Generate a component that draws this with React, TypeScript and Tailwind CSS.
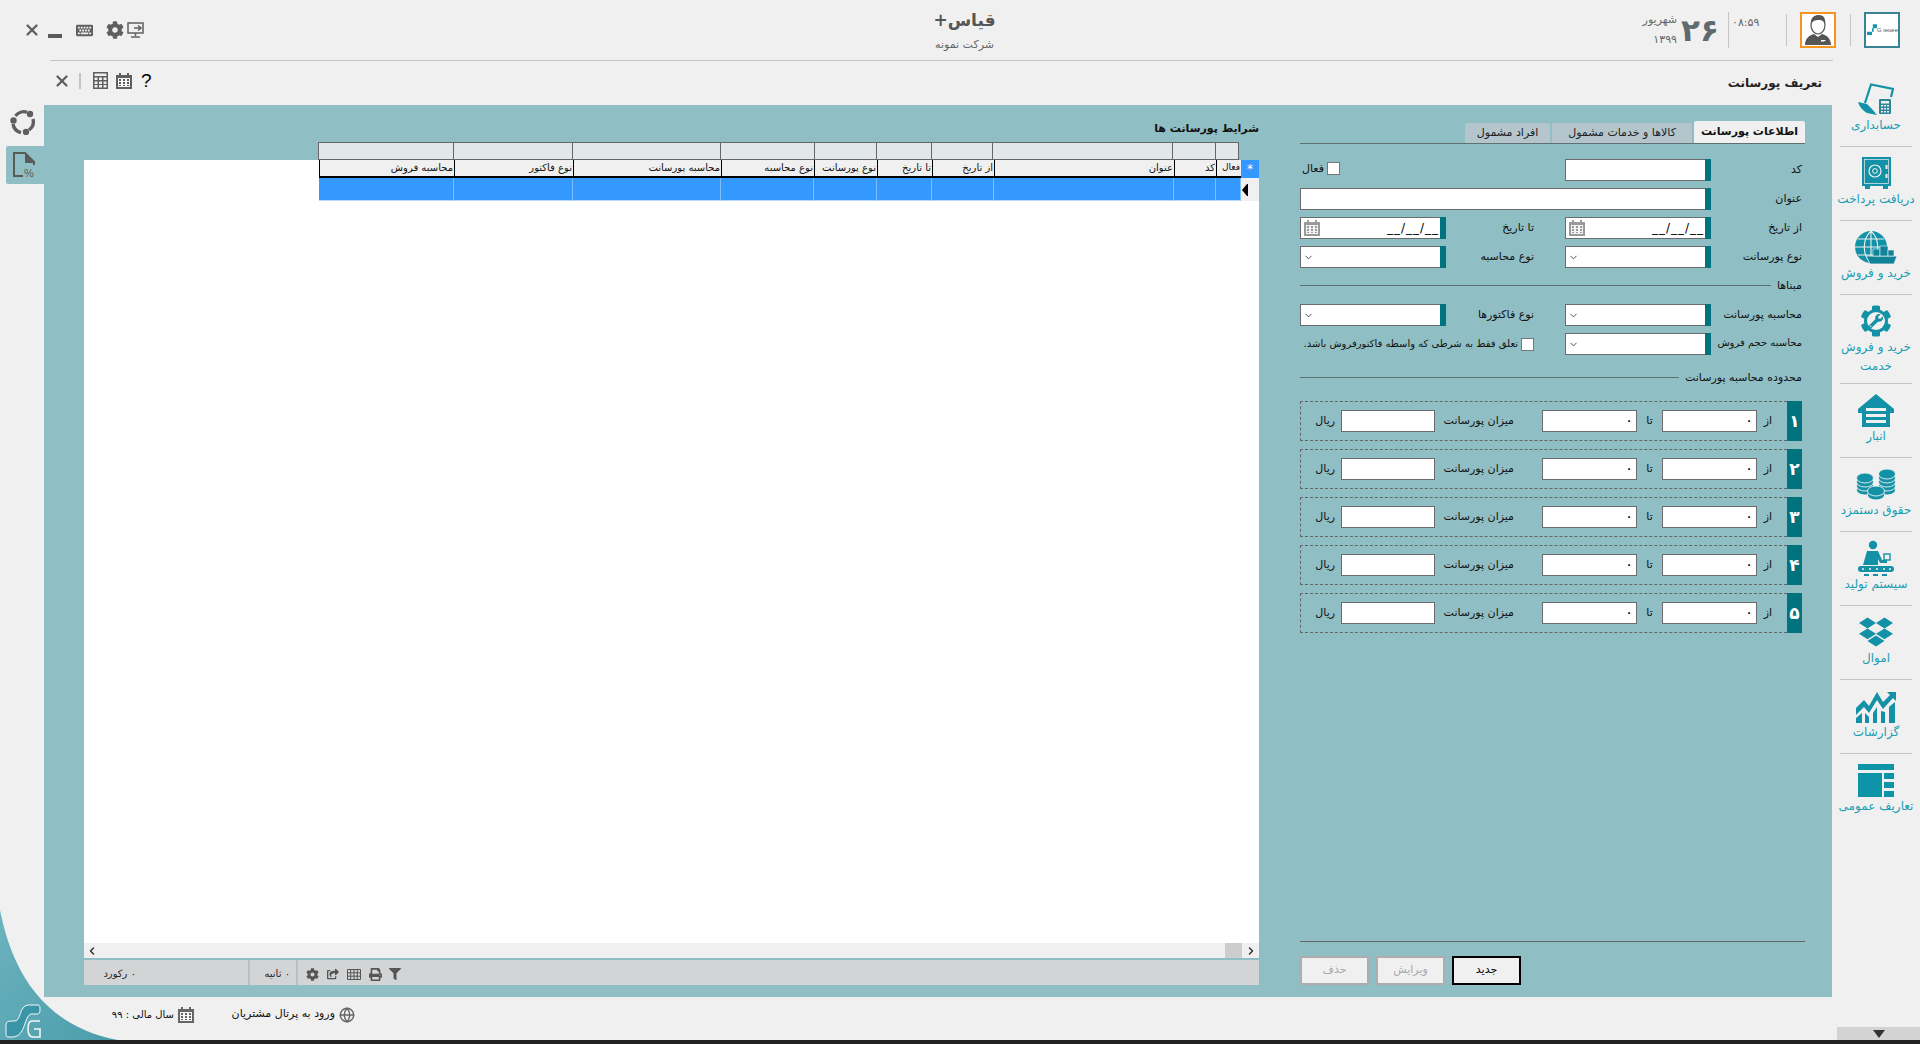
import React from 'react';
import { X, ChevronDown, ChevronLeft, ChevronRight, Globe } from 'lucide-react';
import { FaCog, FaKeyboard, FaDropbox, FaFilter, FaPrint, FaShareSquare, FaWrench } from 'react-icons/fa';

const teal = 'text-[#1391a6]';

// grid columns, left to right as they are on screen
const columns = [
  { title: 'محاسبه فروش', head: 'w-[135px] text-[10px]', filter: 'w-[135px]' },
  { title: 'نوع فاکتور', head: 'w-[119px] text-[10px]', filter: 'w-[119px]' },
  { title: 'محاسبه پورسانت', head: 'w-[148px] text-[10px]', filter: 'w-[148px]' },
  { title: 'نوع محاسبه', head: 'w-[93px] text-[10px]', filter: 'w-[94px]' },
  { title: 'نوع پورسانت', head: 'w-[63px] text-[10px]', filter: 'w-[62px]' },
  { title: 'تا تاریخ', head: 'w-[55px] text-[10px]', filter: 'w-[55px]' },
  { title: 'از تاریخ', head: 'w-[62px] text-[10px]', filter: 'w-[61px]' },
  { title: 'عنوان', head: 'w-[180px] text-[10px]', filter: 'w-[180px]' },
  { title: 'کد', head: 'w-[42px] text-[10px]', filter: 'w-[43px]' },
  { title: 'فعال', head: 'w-[25px] text-[9px]', filter: 'w-[24px]' },
];

const Label: React.FC<{ children: React.ReactNode; className?: string }> = ({ children, className }) => (
  <span dir="rtl" className={`leading-none text-[#111] whitespace-nowrap ${className ?? 'text-[11px]'}`}>{children}</span>
);

const Field: React.FC<{ className?: string; children?: React.ReactNode }> = ({ className, children }) => (
  <div className={`flex h-[22px] bg-white ${className ?? ''}`}>
    <div className="flex-1 flex items-center min-w-0 border border-r-0 border-[#6b6b6b]">{children}</div>
    <div className="w-[6px] bg-[#00737f]" />
  </div>
);

const CalendarGlyph: React.FC<{ className?: string; size?: number }> = ({ className, size = 16 }) => (
  <svg width={size} height={size} viewBox="0 0 16 16" className={className} fill="currentColor">
    <path d="M3 0h2v2h6V0h2v2h3v14H0V2h3z" />
    <path d="M2 5h12v9H2z" fill="#f4f4f4" />
    <path d="M3 6h2v2H3zM7 6h2v2H7zM11 6h2v2h-2zM3 9h2v2H3zM7 9h2v2H7zM11 9h2v2h-2zM3 12h2v1H3zM7 12h2v1H7zM11 12h2v1h-2z" />
  </svg>
);

const DateField: React.FC = () => (
  <Field className="w-full">
    <CalendarGlyph className="ml-[3px] text-[#9a9a9a]" />
    <span className="ml-auto mr-[1px] text-[12px] leading-none text-black tracking-[1px]">__/__/__</span>
  </Field>
);

const SelectField: React.FC = () => (
  <Field className="w-full">
    <ChevronDown className="ml-[2px] text-[#444]" size={11} />
  </Field>
);

const LabelCell: React.FC<{ children: React.ReactNode }> = ({ children }) => (
  <div className="flex justify-end items-center h-[22px] pb-[2px]">{children}</div>
);

const FormRow: React.FC<{ label: string; left: React.ReactNode; leftLabel?: React.ReactNode; field: React.ReactNode; className?: string }> = ({ label, left, leftLabel, field, className }) => (
  <div className={`grid grid-cols-[146px_88px_31px_146px_91px] items-center h-[22px] ${className ?? ''}`}>
    <div className="flex items-center">{left}</div>
    <LabelCell>{leftLabel}</LabelCell>
    <div />
    <div>{field}</div>
    <LabelCell><Label>{label}</Label></LabelCell>
  </div>
);

const Divider: React.FC<{ label: string; className?: string }> = ({ label, className }) => (
  <div className={`flex items-center w-[502px] gap-[6px] ${className ?? ''}`}>
    <div className="flex-1 h-[1px] bg-[#5f6f72]" />
    <Label>{label}</Label>
  </div>
);

const RangeInput: React.FC = () => (
  <div className="w-[95px] h-[22px] bg-white border border-[#6b6b6b] flex items-center justify-end pr-[4px] text-[10px] font-bold leading-none text-black">۰</div>
);

const RangeRow: React.FC<{ num: string }> = ({ num }) => (
  <div className="flex w-[502px] h-[40px]">
    <div className="flex-1 flex items-center border border-r-0 border-dashed border-[#666] pl-[16px]">
      <div className="flex justify-end w-[24px] pr-[6px] pb-[2px] leading-none"><Label>ریال</Label></div>
      <div className="w-[94px] h-[22px] bg-white border border-[#6b6b6b]" />
      <div className="flex justify-end w-[79px] pb-[2px] leading-none"><Label>میزان پورسانت</Label></div>
      <div className="w-[28px]" />
      <RangeInput />
      <div className="flex justify-center w-[25px] pb-[2px] leading-none"><Label>تا</Label></div>
      <RangeInput />
      <div className="flex justify-end w-[15px] pb-[2px] leading-none"><Label>از</Label></div>
    </div>
    <div className="w-[15px] bg-[#00737f] flex items-center justify-center text-white text-[17px] leading-none font-bold">{num}</div>
  </div>
);

const Tab: React.FC<{ label: string; active?: boolean; className: string }> = ({ label, active, className }) => (
  <div dir="rtl" className={`flex items-center justify-center text-[11px] whitespace-nowrap rounded-t-[2px] ${active ? 'h-[22px] bg-[#f0f0f0] font-bold text-[#111]' : 'h-[20px] bg-[#b4c6cc] text-[#222]'} ${className}`}>{label}</div>
);

const ActionButton: React.FC<{ label: string; primary?: boolean }> = ({ label, primary }) => (
  <div dir="rtl" className={`flex items-center justify-center w-[69px] h-[29px] bg-[#f0f0f0] text-[11px] ${primary ? 'border-[2px] border-black text-black' : 'border-[2px] border-[#adadad] text-[#a8a8a8]'}`}>{label}</div>
);

const AccountingIcon = () => (
  <svg width="36" height="32" viewBox="0 0 36 32" className={teal} fill="currentColor">
    <path d="M7 20 L13 1.5 L35 6 L33 14" fill="none" stroke="currentColor" strokeWidth="2.2" />
    <path d="M0 19 L9 21 L14 26 L19 32 L9 30 Q2 26 0 19 Z" />
    <rect x="21" y="16" width="12" height="15" rx="1" fill="#2c8796" />
    <rect x="23" y="18" width="8" height="2.5" fill="#f0f0f0" />
    <path d="M23 22h2v1.6h-2zM26 22h2v1.6h-2zM29 22h2v1.6h-2zM23 25h2v1.6h-2zM26 25h2v1.6h-2zM29 25h2v1.6h-2zM23 28h2v1.6h-2zM26 28h2v1.6h-2zM29 28h2v1.6h-2z" fill="#f0f0f0" />
  </svg>
);

const SafeIcon = () => (
  <svg width="29" height="32" viewBox="0 0 29 32" className={teal}>
    <rect x="0" y="0" width="29" height="29" fill="currentColor" />
    <rect x="2.5" y="2.5" width="24" height="24" fill="none" stroke="#f0f0f0" strokeWidth="0.7" />
    <circle cx="13" cy="14" r="6" fill="none" stroke="#f0f0f0" strokeWidth="1.2" />
    <circle cx="13" cy="14" r="2.4" fill="none" stroke="#f0f0f0" strokeWidth="1" />
    <path d="M23.5 8h2v4h-2zM23.5 17h2v4h-2z" fill="#f0f0f0" />
    <path d="M3 29h5v3H3zM21 29h5v3h-5z" fill="currentColor" />
  </svg>
);

const TradeIcon = () => (
  <svg width="42" height="33" viewBox="0 0 42 33" className={teal}>
    <circle cx="16" cy="16" r="16" fill="currentColor" />
    <path d="M16 0v32M0 16h32M3 8h26M3 24h26M16 0c-9 8-9 24 0 32M16 0c9 8 9 24 0 32" fill="none" stroke="#f0f0f0" strokeWidth="1.1" />
    <path d="M11 25h31l-3 8H15z" fill="#0f8397" stroke="#f0f0f0" strokeWidth="0.8" />
    <rect x="18" y="18" width="7" height="7" fill="#0f8397" stroke="#f0f0f0" strokeWidth="0.6" />
    <rect x="25" y="15" width="8" height="10" fill="#0f8397" stroke="#f0f0f0" strokeWidth="0.6" />
    <rect x="33" y="19" width="6" height="6" fill="#0f8397" stroke="#f0f0f0" strokeWidth="0.6" />
  </svg>
);

const ServiceIcon = () => (
  <div className={`relative w-[32px] h-[32px] ${teal}`}>
    <FaCog size={32} />
    <div className="absolute inset-[7px] rounded-full bg-[#f0f0f0] flex items-center justify-center"><FaWrench size={14} /></div>
  </div>
);

const WarehouseIcon = () => (
  <svg width="36" height="33" viewBox="0 0 36 33" className={teal} fill="currentColor">
    <path d="M18 0 L36 15 V19 H32 V33 H4 V19 H0 V15 Z" />
    <path d="M8 14h20v4H8zM8 20h20v4H8zM8 26h20v5H8z" fill="#f0f0f0" />
    <path d="M8 17h20v3H8zM8 23h20v3H8zM8 29h20v2H8z" fill="currentColor" />
  </svg>
);

const CoinStack: React.FC<{ x: number; y: number; n: number }> = ({ x, y, n }) => (
  <g>
    {Array.from({ length: n }).map((_, i) => (
      <ellipse key={i} cx={x} cy={y + (n - 1 - i) * 4} rx="8.5" ry="5" fill="currentColor" stroke="#f0f0f0" strokeWidth="0.9" />
    ))}
  </g>
);

const CoinsIcon = () => (
  <svg width="40" height="34" viewBox="0 0 40 34" className={teal}>
    <CoinStack x={9} y={11} n={4} />
    <CoinStack x={31} y={7} n={5} />
    <CoinStack x={20} y={24} n={2} />
  </svg>
);

const WorkerIcon = () => (
  <svg width="36" height="36" viewBox="0 0 36 36" className={teal} fill="currentColor">
    <circle cx="15" cy="5" r="4.2" />
    <path d="M9 11 H20 L24 20 H29 V23 H22 L20 19 V25 H5 Z" />
    <rect x="26" y="14" width="6" height="6" fill="none" stroke="currentColor" strokeWidth="1.4" />
    <rect x="0" y="26" width="36" height="6" rx="3" />
    <circle cx="5" cy="29" r="1" fill="#f0f0f0" /><circle cx="12" cy="29" r="1" fill="#f0f0f0" /><circle cx="19" cy="29" r="1" fill="#f0f0f0" /><circle cx="26" cy="29" r="1" fill="#f0f0f0" /><circle cx="32" cy="29" r="1" fill="#f0f0f0" />
    <path d="M6 34h5v2H6zM15 34h5v2h-5zM24 34h5v2h-5z" />
  </svg>
);

const ReportIcon = () => (
  <svg width="40" height="33" viewBox="0 0 40 33" className={teal} fill="currentColor">
    <path d="M0 18 L8 10 L13 16 L21 2 L27 12 L34 5 L31 2 H40 V11 L37 8 L27 19 L21 10 L13 23 L8 17 L0 25 Z" />
    <path d="M0 28 L6 23 V33 H0 Z M9 23 L13 27 V33 H9 Z M17 23 L21 17 V33 H17 Z M25 21 L29 22 V33 H25 Z M33 17 L39 12 V33 H33 Z" />
  </svg>
);

const DefinitionsIcon = () => (
  <svg width="36" height="33" viewBox="0 0 36 33" className="text-[#0d94a8]" fill="currentColor">
    <rect x="0" y="0" width="36" height="6" />
    <rect x="0" y="9" width="24" height="24" />
    <rect x="26" y="9" width="10" height="6" />
    <rect x="26" y="18" width="10" height="6" />
    <rect x="26" y="27" width="10" height="6" />
  </svg>
);

const sideItems: { label: React.ReactNode; icon: React.ReactNode; tall?: boolean; last?: boolean }[] = [
  { label: 'حسابداری', icon: <AccountingIcon /> },
  { label: 'دریافت پرداخت', icon: <SafeIcon /> },
  { label: 'خرید و فروش', icon: <TradeIcon /> },
  { label: <>خرید و فروش<br />خدمت</>, icon: <ServiceIcon />, tall: true },
  { label: 'انبار', icon: <WarehouseIcon /> },
  { label: 'حقوق دستمزد', icon: <CoinsIcon /> },
  { label: 'سیستم تولید', icon: <WorkerIcon /> },
  { label: 'اموال', icon: <FaDropbox size={34} className={teal} /> },
  { label: 'گزارشات', icon: <ReportIcon /> },
  { label: 'تعاریف عمومی', icon: <DefinitionsIcon />, last: true },
];

const SideItem: React.FC<{ item: (typeof sideItems)[number] }> = ({ item }) => (
  <div className={`flex flex-col items-center pt-[10px] ${item.tall ? 'h-[89px]' : 'h-[74px]'} ${item.last ? '' : 'border-b border-[#c4c4c4]'}`}>
    <div className="h-[32px] flex items-center justify-center">{item.icon}</div>
    <div dir="rtl" className="mt-[1px] text-[12px] leading-[19px] text-center text-[#1b9db3] whitespace-nowrap">{item.label}</div>
  </div>
);

const RefreshIcon = () => (
  <svg width="26" height="26" viewBox="0 0 26 26" fill="none" stroke="#5f5f5f" strokeWidth="3.4">
    <path d="M5.5 7 A10.5 10.5 0 0 1 17 3.2" />
    <path d="M23 10 A10.5 10.5 0 0 1 19 21" />
    <path d="M11 23.6 A10.5 10.5 0 0 1 3 15" />
    <circle cx="20" cy="5" r="3.2" fill="#5f5f5f" stroke="none" />
    <circle cx="16" cy="23" r="3.2" fill="#5f5f5f" stroke="none" />
    <circle cx="3.5" cy="11.5" r="3.2" fill="#5f5f5f" stroke="none" />
  </svg>
);

const PercentDocIcon = () => (
  <svg width="24" height="26" viewBox="0 0 24 26" fill="none" stroke="#5a5a5a" strokeWidth="2">
    <path d="M10 24 H1 V1 H12 L21 10 V13" />
    <path d="M13 2 V10 H20" strokeWidth="2" fill="#5a5a5a" />
    <text x="11" y="25" fontSize="11" fill="#5a5a5a" stroke="none" fontFamily="Liberation Sans">%</text>
  </svg>
);

const CalculatorIcon = () => (
  <svg width="15" height="17" viewBox="0 0 15 17" fill="#5f5f5f">
    <path d="M0 0h15v17H0z" />
    <path d="M1.5 1.5h12v2.5h-12zM1.5 5.5h3v2.5h-3zM6 5.5h3v2.5H6zM10.5 5.5h3v2.5h-3zM1.5 9.5h3V12h-3zM6 9.5h3V12H6zM10.5 9.5h3V12h-3zM1.5 13h3v2.5h-3zM6 13h3v2.5H6zM10.5 13h3v2.5h-3z" fill="#f0f0f0" />
  </svg>
);

const GridGlyph = () => (
  <svg width="14" height="11" viewBox="0 0 14 11" fill="none" stroke="#555" strokeWidth="1">
    <path d="M.5.5h13v10H.5zM.5 3.8h13M.5 7.2h13M3.7.5v10M7 .5v10M10.3.5v10" />
  </svg>
);

const Avatar = () => (
  <svg width="32" height="32" viewBox="0 0 32 32">
    <path d="M3 31 C3 24 8 21 12 20 L16 23 L20 20 C24 21 29 24 29 31 Z" fill="#555" />
    <path d="M19 26h5l-2 1.5h-3z" fill="#fff" />
    <ellipse cx="16" cy="11" rx="7" ry="9" fill="#fff" stroke="#555" strokeWidth="1.2" />
    <path d="M9 11 C8 3 13 1 17 1 C22 1 24 5 23 11 C22 7 20 6 17 6 C13 6 10 7 9 11 Z" fill="#555" />
  </svg>
);

const BrandLogo = () => (
  <svg width="36" height="34" viewBox="0 0 36 34" fill="none">
    <path d="M1 21 C1 18 3 17 6 17 H10 C16 17 14 2 23 1 H33 C35 1 35 3 35 6 C35 9 34 10 32 10 H26 C19 12 21 31 9 33 H3 C1 33 1 31 1 29 Z" fill="#3a95a6" stroke="#f2f7f8" strokeWidth="1" />
    <path d="M35 17 H27 C24 17 23 20 23 25 C23 30 25 33 28 33 H35 V25 H29" stroke="#f2f7f8" strokeWidth="1.6" />
  </svg>
);

export default function App() {
  return (
    <div className="relative flex flex-col w-full h-screen overflow-hidden bg-[#f0f0f0] font-['DejaVu_Sans','Noto_Sans',sans-serif]">
      {/* curved corner behind the logo */}
      <svg className="absolute left-0 bottom-[4px]" width="130" height="130" viewBox="0 0 130 130">
        <defs>
          <linearGradient id="corner" x1="0" y1="0" x2="1" y2="1">
            <stop offset="0" stopColor="#6cb3be" />
            <stop offset="1" stopColor="#4b9dab" />
          </linearGradient>
        </defs>
        <path d="M0 0 C8 40 30 114 118 130 L0 130 Z" fill="url(#corner)" />
      </svg>

      {/* top bar */}
      <header className="flex items-center h-[60px] shrink-0">
        <div className="flex items-center w-[150px] pl-[23px] text-[#5f5f5f]">
          <X size={18} strokeWidth={3} />
          <div className="w-[14px] h-[4px] bg-[#5a5a5a] ml-[7px] mt-[11px]" />
          <FaKeyboard size={17} className="ml-[14px]" />
          <FaCog size={18} className="ml-[13px]" />
          <svg width="17" height="16" viewBox="0 0 17 16" fill="none" stroke="#5f5f5f" strokeWidth="1.5" className="ml-[3px]">
            <rect x="1" y="1" width="15" height="10" />
            <path d="M8.5 11v3M4 15h9" />
            <path d="M7 6h7M11 3.5 14 6l-3 2.5" />
          </svg>
        </div>
        <div className="flex-1 flex flex-col items-center pl-[136px]">
          <span dir="rtl" className="text-[17px] leading-[24px] font-bold text-[#555]">قیاس+</span>
          <span dir="rtl" className="mt-[6px] text-[11px] leading-[14px] text-[#666]">شرکت نمونه</span>
        </div>
        <div className="flex items-center h-[36px] pr-[20px]">
          <div className="flex flex-col items-end w-[34px] text-[#666]">
            <span dir="rtl" className="text-[11px] leading-[14px] whitespace-nowrap">شهریور</span>
            <span className="mt-[6px] text-[11px] leading-[14px] tracking-[1px]">۱۳۹۹</span>
          </div>
          <span className="ml-[4px] w-[40px] text-[31px] leading-none font-bold text-[#5f6a6c] tracking-[2px] whitespace-nowrap">۲۶</span>
          <div className="w-[1px] h-[36px] bg-[#c4c4c4] ml-[7px]" />
          <span className="ml-[3px] w-[54px] self-start mt-[4px] text-[11px] leading-[14px] text-[#666] tracking-[1px]">۰۸:۵۹</span>
          <div className="w-[1px] h-[32px] bg-[#c4c4c4]" />
          <div className="ml-[13px] w-[36px] h-[36px] border-[2px] border-[#f7931e] bg-white flex items-center justify-center overflow-hidden">
            <Avatar />
          </div>
          <div className="w-[1px] h-[32px] bg-[#c4c4c4] ml-[14px]" />
          <div className="ml-[13px] w-[36px] h-[36px] border-[2px] border-[#3a8296] bg-white flex items-center pl-[1px]">
            <svg width="10" height="14" viewBox="0 0 12 14" fill="#1797ab" className="shrink-0"><path d="M0 9h6V5h1V0h5v5H8v4H6v4H0z" /></svg>
            <span className="text-[6px] leading-none text-[#555] whitespace-nowrap font-['Liberation_Sans',sans-serif]">G ieuee</span>
          </div>
        </div>
      </header>
      <div className="ml-[50px] mr-[87px] h-[1px] bg-[#c4c4c4] shrink-0" />

      <div className="flex flex-1 min-h-0">
        <div className="flex flex-col w-[1832px] shrink-0">
          {/* window toolbar */}
          <div className="flex items-center h-[44px] shrink-0 pl-[53px] pr-[10px]">
            <X size={18} strokeWidth={3} className="text-[#5f5f5f] mb-[5px]" />
            <div className="w-[2px] h-[16px] bg-[#c4c4c4] ml-[8px] mb-[5px]" />
            <div className="ml-[12px] mb-[5px]"><CalculatorIcon /></div>
            <CalendarGlyph size={16} className="ml-[8px] mb-[5px] text-[#5f5f5f]" />
            <span className="ml-[9px] mb-[5px] text-[19px] leading-none text-black font-['Liberation_Sans',sans-serif]">?</span>
            <span dir="rtl" className="ml-auto text-[12px] font-bold text-[#222]">تعریف پورسانت</span>
          </div>

          <div className="flex flex-1 min-h-0">
            {/* open forms column */}
            <div className="flex flex-col items-end w-[44px] shrink-0 pt-[4px]">
              <div className="w-[44px] flex justify-center pl-[2px] h-[37px] items-start"><RefreshIcon /></div>
              <div className="w-[38px] h-[38px] bg-[#8fbec4] flex items-center justify-center rounded-l-[2px]"><PercentDocIcon /></div>
            </div>

            {/* main panel */}
            <main className="relative flex flex-1 h-[892px] bg-[#8fbec4] pl-[40px] pt-[16px] pb-[12px]">
              {/* grid side */}
              <section className="flex flex-col w-[1175px] shrink-0">
                <div dir="rtl" className="h-[21px] text-[11px] leading-[16px] font-bold text-[#111]">شرایط پورسانت ها</div>
                <div className="flex h-[18px] pl-[234px]">
                  {columns.map((c) => (
                    <div key={c.title} className={`${c.filter} h-full bg-[#e2e8ea] border border-r-0 last:border-r border-[#666]`} />
                  ))}
                </div>
                <div className="flex-1 min-h-0 bg-white">
                  <div className="flex h-[18px] pl-[235px]">
                    {columns.map((c) => (
                      <div key={c.title} dir="rtl" className={`${c.head} h-full bg-[#f0f0f0] border-l border-b-[2px] border-black leading-[15px] pr-[1px] text-[#111] whitespace-nowrap overflow-hidden`}>{c.title}</div>
                    ))}
                    <div className="w-[18px] h-full bg-[#3399ff] flex items-center justify-center text-white text-[12px]">*</div>
                  </div>
                  <div className="flex h-[23px] pl-[235px]">
                    {columns.map((c) => (
                      <div key={c.title} className={`${c.head} h-full bg-[#3399ff] border-r border-b border-r-[#7fbfff] border-b-[#b8d8f8]`} />
                    ))}
                    <div className="w-[18px] h-full bg-[#f0f0f0] flex items-center pl-[1px]">
                      <div className="w-0 h-0 border-y-[6px] border-y-transparent border-r-[5px] border-r-black" />
                      <div className="w-[1px] h-[12px] bg-black" />
                    </div>
                  </div>
                </div>
                {/* horizontal scrollbar */}
                <div className="flex items-center h-[15px] bg-[#f0f0f0]">
                  <ChevronLeft size={12} strokeWidth={3} className="ml-[2px] text-[#333]" />
                  <div className="ml-auto w-[17px] h-[15px] bg-[#cdcdcd]" />
                  <ChevronRight size={12} strokeWidth={3} className="ml-[3px] mr-[2px] text-[#333]" />
                </div>
                <div className="h-[2px]" />
                {/* status strip */}
                <div className="flex items-center h-[25px] bg-[#d3d4d5] text-[#555]">
                  <div dir="rtl" className="w-[164px] h-full flex items-center pt-[2px] pr-[112px] text-[10px] text-[#222] whitespace-nowrap">۰ رکورد</div>
                  <div className="w-[2px] h-full bg-[#bdbdbd]" />
                  <div dir="rtl" className="w-[46px] h-full flex items-center pt-[2px] pr-[6px] text-[10px] text-[#222] whitespace-nowrap">۰ ثانیه</div>
                  <div className="w-[2px] h-full bg-[#bdbdbd]" />
                  <div className="flex items-center h-full pt-[3px]">
                    <FaCog size={13} className="ml-[8px]" />
                    <FaShareSquare size={12} className="ml-[8px]" />
                    <div className="ml-[8px]"><GridGlyph /></div>
                    <FaPrint size={13} className="ml-[8px]" />
                    <FaFilter size={12} className="ml-[7px]" />
                  </div>
                </div>
              </section>

              {/* form side */}
              <section className="flex flex-col w-[505px] ml-[41px]">
                <div className="flex items-end justify-end gap-[2px] h-[23px] border-b-[1px] border-[#5f6f72] pr-0">
                  <Tab label="افراد مشمول" className="w-[85px]" />
                  <Tab label="کالاها و خدمات مشمول" className="w-[140px]" />
                  <Tab label="اطلاعات پورسانت" active className="w-[111px]" />
                </div>

                <FormRow
                  className="mt-[15px]"
                  label="کد"
                  left={<div className="flex items-center w-full pl-[2px] mb-[3px]"><Label>فعال</Label><div className="ml-[3px] w-[13px] h-[13px] bg-white border border-[#777]" /></div>}
                  field={<Field />}
                />
                <div className="mt-[7px] grid grid-cols-[411px_91px] items-center h-[22px]">
                  <Field />
                  <LabelCell><Label>عنوان</Label></LabelCell>
                </div>
                <FormRow className="mt-[7px]" label="از تاریخ" left={<DateField />} leftLabel={<Label>تا تاریخ</Label>} field={<DateField />} />
                <FormRow className="mt-[7px]" label="نوع پورسانت" left={<SelectField />} leftLabel={<Label>نوع محاسبه</Label>} field={<SelectField />} />
                <Divider label="مبناها" className="mt-[9px] h-[16px]" />
                <FormRow className="mt-[11px]" label="محاسبه پورسانت" left={<SelectField />} leftLabel={<Label>نوع فاکتورها</Label>} field={<SelectField />} />
                <div className="mt-[7px] grid grid-cols-[234px_31px_146px_91px] items-center h-[22px]">
                  <div className="flex items-center justify-end">
                    <Label className="text-[10px]">تعلق فقط به شرطی که واسطه فاکتورفروش باشد.</Label>
                    <div className="ml-[3px] w-[13px] h-[13px] bg-white border border-[#777] shrink-0" />
                  </div>
                  <div />
                  <SelectField />
                  <LabelCell><Label className="text-[10px]">محاسبه حجم فروش</Label></LabelCell>
                </div>
                <Divider label="محدوده محاسبه پورسانت" className="mt-[14px] h-[16px]" />
                <div className="flex flex-col gap-[8px] mt-[16px]">
                  {['۱', '۲', '۳', '۴', '۵'].map((n) => <RangeRow key={n} num={n} />)}
                </div>

                <div className="mt-auto h-[1px] bg-[#666]" />
                <div className="flex gap-[7px] mt-[14px]">
                  <ActionButton label="حذف" />
                  <ActionButton label="ویرایش" />
                  <ActionButton label="جدید" primary />
                </div>
              </section>
            </main>
          </div>

          {/* bottom status */}
          <footer className="relative flex items-center h-[43px] shrink-0 pl-[5px] pb-[8px]">
            <div className="self-end -mb-[6px]"><BrandLogo /></div>
            <span dir="rtl" className="ml-[69px] w-[64px] text-[10px] tracking-[0.2px] text-[#111] whitespace-nowrap">سال مالی : ۹۹</span>
            <CalendarGlyph size={16} className="ml-[4px] text-[#666]" />
            <span dir="rtl" className="ml-[37px] w-[104px] text-[11px] text-[#111] whitespace-nowrap">ورود به پرتال مشتریان</span>
            <Globe size={16} strokeWidth={2.2} className="ml-[4px] text-[#666]" />
          </footer>
        </div>

        {/* module sidebar */}
        <aside className="flex flex-col w-[88px] shrink-0 px-[8px] pt-[12px]">
          {sideItems.map((item, i) => <SideItem key={i} item={item} />)}
          <div className="mt-auto -mx-[8px] ml-[-3px] h-[13px] bg-[#d3d3d3] flex items-center justify-center">
            <div className="w-0 h-0 border-x-[6px] border-x-transparent border-t-[8px] border-t-[#333]" />
          </div>
        </aside>
      </div>
      <div className="h-[4px] bg-[#222] shrink-0" />
    </div>
  );
}
